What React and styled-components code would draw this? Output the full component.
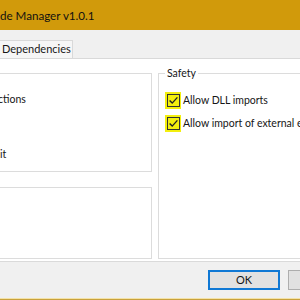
import React from "react";
import styled, { createGlobalStyle } from "styled-components";

const Global = createGlobalStyle`
  html, body { margin: 0; padding: 0; background: #f0f0f0; overflow: hidden; }
  body { font-family: Lato, "Liberation Sans", sans-serif; }
`;

const Viewport = styled.div`
  width: 300px;
  height: 300px;
  overflow: hidden;
`;

const Window = styled.div`
  width: 370px;
  height: 300px;
  display: flex;
  flex-direction: column;
  background: #f0f0f0;
  border-bottom: 1px solid #c9a23c;
  box-sizing: border-box;
  color: #161616;
  font-size: 10.5px;
`;

const TitleBar = styled.div`
  height: 30px;
  flex: none;
  background: #d19a0b;
  display: flex;
  align-items: center;
  padding: 1px 0 0 0;
  box-sizing: border-box;
  font-size: 11.6px;
  color: #111;
  white-space: nowrap;
`;

const TabStrip = styled.div`
  flex: none;
  height: 28px;
  padding-top: 10px;
  box-sizing: border-box;
  display: flex;
  align-items: flex-end;
`;

const Tab = styled.div`
  height: 18px;
  width: 73px;
  box-sizing: border-box;
  border-top: 1px solid #d9d9d9;
  border-right: 1px solid #d9d9d9;
  background: #f6f6f6;
  padding-left: 2px;
  line-height: 16px;
  font-size: 11px;
  white-space: nowrap;
`;

const TabPage = styled.div`
  flex: none;
  background: #ffffff;
  border-top: 1px solid #d9d9d9;
  border-bottom: 1px solid #dadada;
  padding: 7px 0 2px 0;
  display: grid;
  grid-template-columns: 152px 1fr;
  column-gap: 6px;
  align-items: stretch;
`;

const Column = styled.div`
  margin-top: 7px;
  display: flex;
  flex-direction: column;
  gap: 15px;
`;

const Group = styled.fieldset`
  margin: 0;
  min-width: 0;
  box-sizing: border-box;
  border: 1px solid #dcdcdc;
  border-left: ${(p) => (p.$cutLeft ? "none" : "1px solid #dcdcdc")};
  height: ${(p) => (p.$h ? `${p.$h}px` : "auto")};
  padding: ${(p) => p.$pad || "12px 0 0 6px"};
  display: flex;
  flex-direction: column;
  gap: 6px;
  overflow: hidden;
`;

const Legend = styled.legend`
  padding: 0 2px;
  line-height: 14px;
  font-size: 10.5px;
  color: #161616;
`;

const Row = styled.div`
  height: 17px;
  display: flex;
  align-items: center;
  gap: 2px;
  white-space: nowrap;
  line-height: 17px;
  margin-top: ${(p) => (p.$mt ? `${p.$mt}px` : "0")};
  margin-left: ${(p) => (p.$ml ? `${p.$ml}px` : "0")};
`;

const Highlight = styled.span`
  flex: none;
  width: 16px;
  height: 17px;
  background: #f3ef0e;
  display: flex;
  align-items: center;
  justify-content: center;
`;

const Box = styled.span`
  width: 13px;
  height: 13px;
  box-sizing: border-box;
  border: 1px solid #333;
  display: flex;
  align-items: center;
  justify-content: center;
`;

const Footer = styled.div`
  flex: 1;
  display: flex;
  justify-content: flex-end;
  align-items: flex-start;
  padding: 8px 10px 0 0;
  gap: 8px;
  border-bottom: 1px solid #f3e2a8;
`;

const Button = styled.button`
  width: 72px;
  height: 20px;
  box-sizing: border-box;
  background: #e1e1e1;
  border: ${(p) => (p.$default ? "2px solid #0f78d4" : "1px solid #adadad")};
  font-family: inherit;
  font-size: 11px;
  color: #161616;
  padding: 0;
  line-height: 16px;
`;

const Check = () => (
  <svg width="11" height="11" viewBox="0 0 11 11">
    <path d="M1.6 5.4 L4.2 8.1 L9.4 2.4" fill="none" stroke="#222" strokeWidth="1.4" />
  </svg>
);

const CheckRow = ({ children }) => (
  <Row>
    <Highlight>
      <Box>
        <Check />
      </Box>
    </Highlight>
    <span>{children}</span>
  </Row>
);

export default function App() {
  return (
    <Viewport>
      <Global />
      <Window>
        <TitleBar>de Manager v1.0.1</TitleBar>
        <TabStrip>
          <Tab>Dependencies</Tab>
        </TabStrip>
        <TabPage>
          <Column>
            <Group $cutLeft $h={99} $pad="17px 0 0 0">
              <Row $ml={-2}>ctions</Row>
              <Row $mt={32}>it</Row>
            </Group>
            <Group $cutLeft $h={72} $pad="0" />
          </Column>
          <Group>
            <Legend>Safety</Legend>
            <CheckRow>Allow DLL imports</CheckRow>
            <CheckRow>Allow import of external executables</CheckRow>
          </Group>
        </TabPage>
        <Footer>
          <Button $default>OK</Button>
          <Button>Cancel</Button>
        </Footer>
      </Window>
    </Viewport>
  );
}
